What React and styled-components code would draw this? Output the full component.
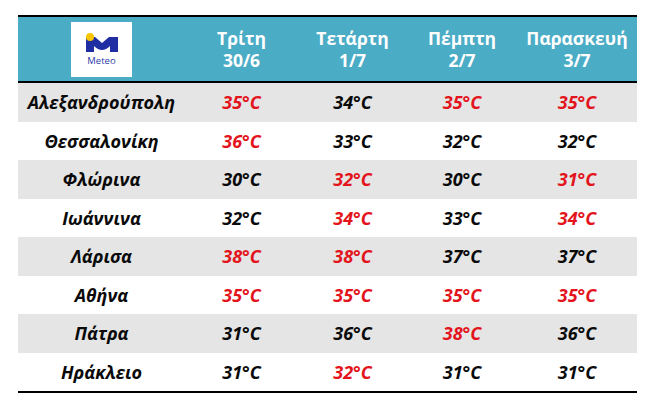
import React from 'react';
import styled, { createGlobalStyle } from 'styled-components';

const GlobalStyle = createGlobalStyle`
  html, body {
    margin: 0;
    padding: 0;
    background: #ffffff;
  }
  body {
    font-family: "Open Sans", "Liberation Sans", sans-serif;
  }
`;

const days = [
  { name: 'Τρίτη', date: '30/6' },
  { name: 'Τετάρτη', date: '1/7' },
  { name: 'Πέμπτη', date: '2/7' },
  { name: 'Παρασκευή', date: '3/7' },
];

// [city, [temp, hot]...]
const rows = [
  ['Αλεξανδρούπολη', [[35, 1], [34, 0], [35, 1], [35, 1]]],
  ['Θεσσαλονίκη', [[36, 1], [33, 0], [32, 0], [32, 0]]],
  ['Φλώρινα', [[30, 0], [32, 1], [30, 0], [31, 1]]],
  ['Ιωάννινα', [[32, 0], [34, 1], [33, 0], [34, 1]]],
  ['Λάρισα', [[38, 1], [38, 1], [37, 0], [37, 0]]],
  ['Αθήνα', [[35, 1], [35, 1], [35, 1], [35, 1]]],
  ['Πάτρα', [[31, 0], [36, 0], [38, 1], [36, 0]]],
  ['Ηράκλειο', [[31, 0], [32, 1], [31, 0], [31, 0]]],
];

const Page = styled.div`
  padding: 15px 0 0 18px;
`;

const Table = styled.div`
  width: 619px;
  border-top: 2px solid #000;
  border-bottom: 2px solid #000;
`;

const Row = styled.div`
  display: grid;
  grid-template-columns: 167px 113px 109px 110px 120px;
  align-items: center;
  height: ${(p) => (p.$head ? '64px' : '38.5px')};
  background: ${(p) => (p.$head ? '#4bacc6' : p.$shade ? '#e5e5e5' : '#ffffff')};
  border-bottom: ${(p) => (p.$head ? '2px solid #000' : 'none')};
`;

const HeadCell = styled.div`
  display: flex;
  flex-direction: column;
  align-items: center;
  justify-content: center;
  color: #ffffff;
  font-weight: 700;
  font-size: 17.5px;
  line-height: 22px;
`;

const LogoBox = styled.div`
  justify-self: center;
  width: 61px;
  height: 55px;
  background: #ffffff;
  display: flex;
  flex-direction: column;
  align-items: center;
  justify-content: center;
  gap: 2px;
`;

const LogoText = styled.span`
  font-family: "Open Sans", "Liberation Sans", sans-serif;
  font-size: 9.5px;
  line-height: 11px;
  color: #2b3aa6;
`;

const City = styled.div`
  text-align: center;
  font-weight: 700;
  font-style: italic;
  font-size: 18px;
  color: #0a0a0a;
  white-space: nowrap;
`;

const Temp = styled.div`
  text-align: center;
  font-weight: 700;
  font-style: italic;
  font-size: 18px;
  color: ${(p) => (p.$hot ? '#e3141c' : '#0a0a0a')};
`;

function Logo() {
  return (
    <LogoBox>
      <svg width="36" height="20" viewBox="0 0 36 20">
        <path d="M2 4 H11 L18 10 L25 4 H34 V19 H26 V13 Q18 21 10 13 V19 H2 Z" fill="#1f2ea3" />
        <circle cx="6" cy="4" r="4" fill="#f7c600" />
      </svg>
      <LogoText>Meteo</LogoText>
    </LogoBox>
  );
}

export default function App() {
  return (
    <Page>
      <GlobalStyle />
      <Table>
        <Row $head>
          <Logo />
          {days.map((d) => (
            <HeadCell key={d.name}>
              <span>{d.name}</span>
              <span>{d.date}</span>
            </HeadCell>
          ))}
        </Row>
        {rows.map(([city, temps], i) => (
          <Row key={city} $shade={i % 2 === 0}>
            <City>{city}</City>
            {temps.map(([t, hot], j) => (
              <Temp key={j} $hot={hot}>
                {t}°C
              </Temp>
            ))}
          </Row>
        ))}
      </Table>
    </Page>
  );
}
